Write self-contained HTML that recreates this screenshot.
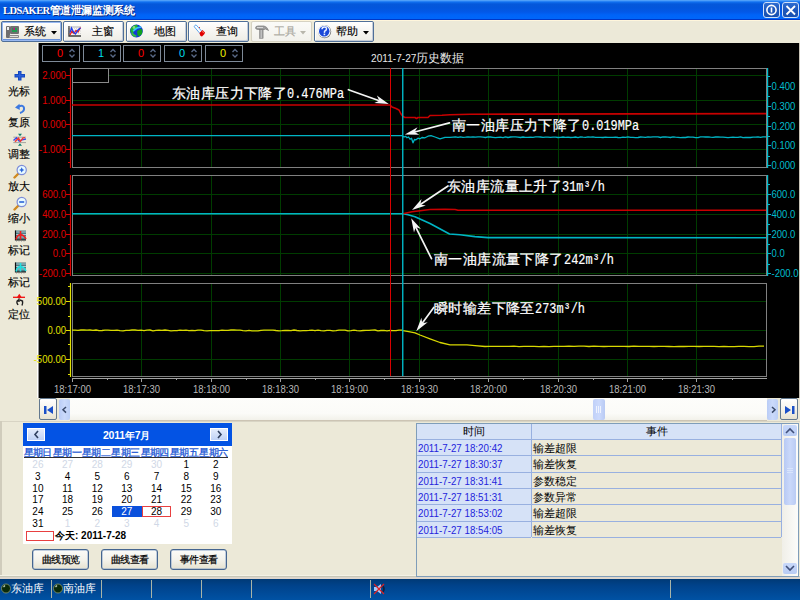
<!DOCTYPE html><html><head><meta charset="utf-8"><style>
*{box-sizing:border-box;margin:0;padding:0}
html,body{width:800px;height:600px;overflow:hidden;background:#ECE9D8;font-family:"Liberation Sans",sans-serif;position:relative}
.a{position:absolute}
#title{left:0;top:0;width:800px;height:20px;background:linear-gradient(#62ACF8 0px,#3A90F8 1px,#1070F0 2px,#0558DA 4px,#0356DC 8px,#0358E8 12px,#0064F8 15px,#0066FA 18.5px,#0040D8 19px,#0030B8 20px)}
#tb{left:0;top:20px;width:800px;height:23px;background:#ECE9D8;border-top:1px solid #FFF6DC}
.btn{position:absolute;top:21px;height:21px;border:1px solid #4F6F98;border-radius:2px;box-shadow:inset 1px 1px 0 #FFFFFF,inset -1px -1px 0 #C4CCD8;background:linear-gradient(#FFFFFF,#F6F5F1 50%,#EEEDE6);font-size:12px;color:#000}
.btn.sel{box-shadow:inset 0 0 0 1px #98B8F0,inset 0 -2px 0 #6890D8;background:linear-gradient(#FFFFFF,#F4F3EE 50%,#E8E6DC)}
.btn .t{position:absolute;top:2px;line-height:14px;white-space:nowrap;-webkit-text-stroke:0.15px currentColor}
#left{left:0;top:43px;width:38px;height:355px;background:#ECE9D8}
.lb{position:absolute;left:8px;font-size:11px;line-height:11px;color:#000;white-space:nowrap;-webkit-text-stroke:0.15px #000}
#chart{left:38px;top:43px;width:762px;height:355px;background:#000}
#bottom{left:0;top:421px;width:800px;height:158px;background:#ECE9D8}
#status{left:0;top:579px;width:800px;height:21px;background:linear-gradient(#003A76,#00428A 30%,#004B99 70%,#0052A4)}
svg text{font-family:"Liberation Sans",sans-serif}
</style></head><body><div id="title" class="a"></div><div id="tb" class="a"></div><div id="left" class="a"></div><div id="bottom" class="a"></div><div id="status" class="a"></div><svg class="a" style="left:0;top:0" width="800" height="600" viewBox="0 0 800 600"><rect x="38" y="43" width="762" height="355" fill="#000"/><line x1="799.5" y1="43" x2="799.5" y2="398" stroke="#C8C4B8"/><line x1="38.5" y1="43" x2="38.5" y2="398" stroke="#8C8C8C"/><line x1="37.5" y1="43" x2="37.5" y2="398" stroke="#FFFFFF"/><rect x="42.5" y="45.5" width="37" height="16" fill="#000" stroke="#7E8A98"/><text x="63" y="57" font-size="11" fill="#FF0000" text-anchor="end">0</text><path d="M69.5,52 L72,49.5 L74.5,52 M69.5,54.5 L72,57 L74.5,54.5" fill="none" stroke="#5A6A88" stroke-width="1.3"/><rect x="83.5" y="45.5" width="37" height="16" fill="#000" stroke="#7E8A98"/><text x="104" y="57" font-size="11" fill="#00DDEE" text-anchor="end">1</text><path d="M110.5,52 L113,49.5 L115.5,52 M110.5,54.5 L113,57 L115.5,54.5" fill="none" stroke="#5A6A88" stroke-width="1.3"/><rect x="123.5" y="45.5" width="37" height="16" fill="#000" stroke="#7E8A98"/><text x="144" y="57" font-size="11" fill="#FF0000" text-anchor="end">0</text><path d="M150.5,52 L153,49.5 L155.5,52 M150.5,54.5 L153,57 L155.5,54.5" fill="none" stroke="#5A6A88" stroke-width="1.3"/><rect x="164.5" y="45.5" width="37" height="16" fill="#000" stroke="#7E8A98"/><text x="185" y="57" font-size="11" fill="#00DDEE" text-anchor="end">0</text><path d="M191.5,52 L194,49.5 L196.5,52 M191.5,54.5 L194,57 L196.5,54.5" fill="none" stroke="#5A6A88" stroke-width="1.3"/><rect x="205.5" y="45.5" width="37" height="16" fill="#000" stroke="#7E8A98"/><text x="226" y="57" font-size="11" fill="#EEEE00" text-anchor="end">0</text><path d="M232.5,52 L235,49.5 L237.5,52 M232.5,54.5 L235,57 L237.5,54.5" fill="none" stroke="#5A6A88" stroke-width="1.3"/><text transform="translate(371,61.5) scale(0.86,1)" font-size="11.8" fill="#E8E8E8">2011-7-27</text><text x="415.5" y="61.5" font-size="12" fill="#E8E8E8">历史数据</text><line x1="72" y1="75.5" x2="766" y2="75.5" stroke="#003C00"/><line x1="72" y1="100.5" x2="766" y2="100.5" stroke="#003C00"/><line x1="72" y1="124.5" x2="766" y2="124.5" stroke="#003C00"/><line x1="72" y1="149.5" x2="766" y2="149.5" stroke="#003C00"/><line x1="141.5" y1="68" x2="141.5" y2="167" stroke="#003C00"/><line x1="211.5" y1="68" x2="211.5" y2="167" stroke="#003C00"/><line x1="280.5" y1="68" x2="280.5" y2="167" stroke="#003C00"/><line x1="349.5" y1="68" x2="349.5" y2="167" stroke="#003C00"/><line x1="419.5" y1="68" x2="419.5" y2="167" stroke="#003C00"/><line x1="488.5" y1="68" x2="488.5" y2="167" stroke="#003C00"/><line x1="558.5" y1="68" x2="558.5" y2="167" stroke="#003C00"/><line x1="627.5" y1="68" x2="627.5" y2="167" stroke="#003C00"/><line x1="696.5" y1="68" x2="696.5" y2="167" stroke="#003C00"/><rect x="72.5" y="68.5" width="694" height="99" fill="none" stroke="#808080"/><line x1="70.5" y1="68" x2="70.5" y2="168" stroke="#E00000" stroke-width="1.2"/><line x1="66" y1="75.5" x2="70" y2="75.5" stroke="#E00000"/><text transform="translate(66,79) scale(0.9,1)" font-size="10.6" fill="#E00000" text-anchor="end">2.000</text><line x1="66" y1="100.5" x2="70" y2="100.5" stroke="#E00000"/><text transform="translate(66,104) scale(0.9,1)" font-size="10.6" fill="#E00000" text-anchor="end">1.000</text><line x1="66" y1="124.5" x2="70" y2="124.5" stroke="#E00000"/><text transform="translate(66,128) scale(0.9,1)" font-size="10.6" fill="#E00000" text-anchor="end">0.000</text><line x1="66" y1="149.5" x2="70" y2="149.5" stroke="#E00000"/><text transform="translate(66,153) scale(0.9,1)" font-size="10.6" fill="#E00000" text-anchor="end">-1.000</text><line x1="68" y1="88.5" x2="70" y2="88.5" stroke="#E00000"/><line x1="68" y1="112.5" x2="70" y2="112.5" stroke="#E00000"/><line x1="68" y1="138.5" x2="70" y2="138.5" stroke="#E00000"/><line x1="68" y1="162.5" x2="70" y2="162.5" stroke="#E00000"/><line x1="767.6" y1="68" x2="767.6" y2="168" stroke="#00BCCC" stroke-width="1.2"/><line x1="767" y1="86.5" x2="771" y2="86.5" stroke="#00BCCC"/><text transform="translate(771.5,90) scale(0.9,1)" font-size="10.6" fill="#00BCCC">0.400</text><line x1="767" y1="106.5" x2="771" y2="106.5" stroke="#00BCCC"/><text transform="translate(771.5,110) scale(0.9,1)" font-size="10.6" fill="#00BCCC">0.300</text><line x1="767" y1="126.5" x2="771" y2="126.5" stroke="#00BCCC"/><text transform="translate(771.5,130) scale(0.9,1)" font-size="10.6" fill="#00BCCC">0.200</text><line x1="767" y1="145.5" x2="771" y2="145.5" stroke="#00BCCC"/><text transform="translate(771.5,149) scale(0.9,1)" font-size="10.6" fill="#00BCCC">0.100</text><line x1="767" y1="165.5" x2="771" y2="165.5" stroke="#00BCCC"/><text transform="translate(771.5,169) scale(0.9,1)" font-size="10.6" fill="#00BCCC">0.000</text><line x1="767" y1="76.5" x2="770" y2="76.5" stroke="#00BCCC"/><line x1="767" y1="96.5" x2="770" y2="96.5" stroke="#00BCCC"/><line x1="767" y1="116.5" x2="770" y2="116.5" stroke="#00BCCC"/><line x1="767" y1="136.5" x2="770" y2="136.5" stroke="#00BCCC"/><line x1="767" y1="156.5" x2="770" y2="156.5" stroke="#00BCCC"/><line x1="72" y1="194.5" x2="766" y2="194.5" stroke="#003C00"/><line x1="72" y1="214.5" x2="766" y2="214.5" stroke="#003C00"/><line x1="72" y1="234.5" x2="766" y2="234.5" stroke="#003C00"/><line x1="72" y1="253.5" x2="766" y2="253.5" stroke="#003C00"/><line x1="72" y1="273.5" x2="766" y2="273.5" stroke="#003C00"/><line x1="141.5" y1="175" x2="141.5" y2="275" stroke="#003C00"/><line x1="211.5" y1="175" x2="211.5" y2="275" stroke="#003C00"/><line x1="280.5" y1="175" x2="280.5" y2="275" stroke="#003C00"/><line x1="349.5" y1="175" x2="349.5" y2="275" stroke="#003C00"/><line x1="419.5" y1="175" x2="419.5" y2="275" stroke="#003C00"/><line x1="488.5" y1="175" x2="488.5" y2="275" stroke="#003C00"/><line x1="558.5" y1="175" x2="558.5" y2="275" stroke="#003C00"/><line x1="627.5" y1="175" x2="627.5" y2="275" stroke="#003C00"/><line x1="696.5" y1="175" x2="696.5" y2="275" stroke="#003C00"/><rect x="72.5" y="175.5" width="694" height="100" fill="none" stroke="#808080"/><line x1="70.5" y1="175" x2="70.5" y2="276" stroke="#E00000" stroke-width="1.2"/><line x1="66" y1="194.5" x2="70" y2="194.5" stroke="#E00000"/><text transform="translate(66,198) scale(0.9,1)" font-size="10.6" fill="#E00000" text-anchor="end">600.0</text><line x1="66" y1="214.5" x2="70" y2="214.5" stroke="#E00000"/><text transform="translate(66,218) scale(0.9,1)" font-size="10.6" fill="#E00000" text-anchor="end">400.0</text><line x1="66" y1="234.5" x2="70" y2="234.5" stroke="#E00000"/><text transform="translate(66,238) scale(0.9,1)" font-size="10.6" fill="#E00000" text-anchor="end">200.0</text><line x1="66" y1="253.5" x2="70" y2="253.5" stroke="#E00000"/><text transform="translate(66,257) scale(0.9,1)" font-size="10.6" fill="#E00000" text-anchor="end">0.0</text><line x1="66" y1="273.5" x2="70" y2="273.5" stroke="#E00000"/><text transform="translate(66,277) scale(0.9,1)" font-size="10.6" fill="#E00000" text-anchor="end">-200.0</text><line x1="68" y1="184.5" x2="70" y2="184.5" stroke="#E00000"/><line x1="68" y1="204.5" x2="70" y2="204.5" stroke="#E00000"/><line x1="68" y1="224.5" x2="70" y2="224.5" stroke="#E00000"/><line x1="68" y1="244.5" x2="70" y2="244.5" stroke="#E00000"/><line x1="68" y1="264.5" x2="70" y2="264.5" stroke="#E00000"/><line x1="767.6" y1="175" x2="767.6" y2="276" stroke="#00BCCC" stroke-width="1.2"/><line x1="767" y1="194.5" x2="771" y2="194.5" stroke="#00BCCC"/><text transform="translate(771.5,198) scale(0.9,1)" font-size="10.6" fill="#00BCCC">600.0</text><line x1="767" y1="214.5" x2="771" y2="214.5" stroke="#00BCCC"/><text transform="translate(771.5,218) scale(0.9,1)" font-size="10.6" fill="#00BCCC">400.0</text><line x1="767" y1="234.5" x2="771" y2="234.5" stroke="#00BCCC"/><text transform="translate(771.5,238) scale(0.9,1)" font-size="10.6" fill="#00BCCC">200.0</text><line x1="767" y1="253.5" x2="771" y2="253.5" stroke="#00BCCC"/><text transform="translate(771.5,257) scale(0.9,1)" font-size="10.6" fill="#00BCCC">0.0</text><line x1="767" y1="273.5" x2="771" y2="273.5" stroke="#00BCCC"/><text transform="translate(771.5,277) scale(0.9,1)" font-size="10.6" fill="#00BCCC">-200.0</text><line x1="767" y1="184.5" x2="770" y2="184.5" stroke="#00BCCC"/><line x1="767" y1="204.5" x2="770" y2="204.5" stroke="#00BCCC"/><line x1="767" y1="224.5" x2="770" y2="224.5" stroke="#00BCCC"/><line x1="767" y1="244.5" x2="770" y2="244.5" stroke="#00BCCC"/><line x1="767" y1="264.5" x2="770" y2="264.5" stroke="#00BCCC"/><line x1="72" y1="301.5" x2="766" y2="301.5" stroke="#003C00"/><line x1="72" y1="330.5" x2="766" y2="330.5" stroke="#003C00"/><line x1="72" y1="359.5" x2="766" y2="359.5" stroke="#003C00"/><line x1="141.5" y1="283" x2="141.5" y2="376" stroke="#003C00"/><line x1="211.5" y1="283" x2="211.5" y2="376" stroke="#003C00"/><line x1="280.5" y1="283" x2="280.5" y2="376" stroke="#003C00"/><line x1="349.5" y1="283" x2="349.5" y2="376" stroke="#003C00"/><line x1="419.5" y1="283" x2="419.5" y2="376" stroke="#003C00"/><line x1="488.5" y1="283" x2="488.5" y2="376" stroke="#003C00"/><line x1="558.5" y1="283" x2="558.5" y2="376" stroke="#003C00"/><line x1="627.5" y1="283" x2="627.5" y2="376" stroke="#003C00"/><line x1="696.5" y1="283" x2="696.5" y2="376" stroke="#003C00"/><rect x="72.5" y="283.5" width="694" height="93" fill="none" stroke="#808080"/><line x1="70.5" y1="283" x2="70.5" y2="377" stroke="#E0E000" stroke-width="1.2"/><line x1="66" y1="301.5" x2="70" y2="301.5" stroke="#E0E000"/><text transform="translate(66,305) scale(0.9,1)" font-size="10.6" fill="#E0E000" text-anchor="end">500.00</text><line x1="66" y1="330.5" x2="70" y2="330.5" stroke="#E0E000"/><text transform="translate(66,334) scale(0.9,1)" font-size="10.6" fill="#E0E000" text-anchor="end">0.00</text><line x1="66" y1="359.5" x2="70" y2="359.5" stroke="#E0E000"/><text transform="translate(66,363) scale(0.9,1)" font-size="10.6" fill="#E0E000" text-anchor="end">-500.00</text><line x1="68" y1="286.5" x2="70" y2="286.5" stroke="#E0E000"/><line x1="68" y1="316.5" x2="70" y2="316.5" stroke="#E0E000"/><line x1="68" y1="344.5" x2="70" y2="344.5" stroke="#E0E000"/><line x1="68" y1="374.5" x2="70" y2="374.5" stroke="#E0E000"/><rect x="72.5" y="68.5" width="36" height="14" fill="#000" stroke="#8A8A8A"/><line x1="72" y1="378.5" x2="767" y2="378.5" stroke="#A0A0A0"/><line x1="72.5" y1="378" x2="72.5" y2="382" stroke="#A0A0A0"/><line x1="107.5" y1="378" x2="107.5" y2="380" stroke="#A0A0A0"/><text transform="translate(72.5,393) scale(0.88,1)" font-size="10.8" fill="#B8B8B8" text-anchor="middle">18:17:00</text><line x1="141.5" y1="378" x2="141.5" y2="382" stroke="#A0A0A0"/><line x1="176.5" y1="378" x2="176.5" y2="380" stroke="#A0A0A0"/><text transform="translate(141.5,393) scale(0.88,1)" font-size="10.8" fill="#B8B8B8" text-anchor="middle">18:17:30</text><line x1="211.5" y1="378" x2="211.5" y2="382" stroke="#A0A0A0"/><line x1="246.5" y1="378" x2="246.5" y2="380" stroke="#A0A0A0"/><text transform="translate(211.5,393) scale(0.88,1)" font-size="10.8" fill="#B8B8B8" text-anchor="middle">18:18:00</text><line x1="280.5" y1="378" x2="280.5" y2="382" stroke="#A0A0A0"/><line x1="315.5" y1="378" x2="315.5" y2="380" stroke="#A0A0A0"/><text transform="translate(280.5,393) scale(0.88,1)" font-size="10.8" fill="#B8B8B8" text-anchor="middle">18:18:30</text><line x1="349.5" y1="378" x2="349.5" y2="382" stroke="#A0A0A0"/><line x1="384.5" y1="378" x2="384.5" y2="380" stroke="#A0A0A0"/><text transform="translate(349.5,393) scale(0.88,1)" font-size="10.8" fill="#B8B8B8" text-anchor="middle">18:19:00</text><line x1="419.5" y1="378" x2="419.5" y2="382" stroke="#A0A0A0"/><line x1="454.5" y1="378" x2="454.5" y2="380" stroke="#A0A0A0"/><text transform="translate(419.5,393) scale(0.88,1)" font-size="10.8" fill="#B8B8B8" text-anchor="middle">18:19:30</text><line x1="488.5" y1="378" x2="488.5" y2="382" stroke="#A0A0A0"/><line x1="523.5" y1="378" x2="523.5" y2="380" stroke="#A0A0A0"/><text transform="translate(488.5,393) scale(0.88,1)" font-size="10.8" fill="#B8B8B8" text-anchor="middle">18:20:00</text><line x1="558.5" y1="378" x2="558.5" y2="382" stroke="#A0A0A0"/><line x1="593.5" y1="378" x2="593.5" y2="380" stroke="#A0A0A0"/><text transform="translate(558.5,393) scale(0.88,1)" font-size="10.8" fill="#B8B8B8" text-anchor="middle">18:20:30</text><line x1="627.5" y1="378" x2="627.5" y2="382" stroke="#A0A0A0"/><line x1="662.5" y1="378" x2="662.5" y2="380" stroke="#A0A0A0"/><text transform="translate(627.5,393) scale(0.88,1)" font-size="10.8" fill="#B8B8B8" text-anchor="middle">18:21:00</text><line x1="696.5" y1="378" x2="696.5" y2="382" stroke="#A0A0A0"/><line x1="732.5" y1="378" x2="732.5" y2="380" stroke="#A0A0A0"/><text transform="translate(696.5,393) scale(0.88,1)" font-size="10.8" fill="#B8B8B8" text-anchor="middle">18:21:30</text><polyline points="72.0,105.0 390.0,105.0 392.0,107.0 396.0,108.5 399.0,110.0 401.0,114.0 403.0,116.5 405.0,117.5 415.0,117.5 416.5,118.5 418.0,117.5 428.0,117.5 430.0,115.5 442.0,115.3 450.0,114.8 470.0,114.2 766.0,113.6" fill="none" stroke="#C80000" stroke-width="1.6" stroke-linejoin="round"/><polyline points="72.0,135.6 402.0,135.6 404.0,137.0 405.5,136.3 407.0,137.8 408.5,137.0 410.0,139.2 411.5,138.3 413.0,142.8 414.5,139.5 416.0,139.8 418.0,138.2 420.0,138.8 422.0,137.5 425.0,137.8 428.0,136.2 431.0,135.6 435.0,137.0 440.0,138.8 445.0,137.3 450.0,137.4 453.0,137.1 455.5,136.9 458.0,137.4 460.5,136.9 463.0,137.3 465.5,137.1 468.0,136.8 470.5,137.2 473.0,136.8 475.5,137.2 478.0,136.9 480.5,136.9 483.0,137.2 485.5,137.5 488.0,136.9 490.5,137.0 493.0,137.3 495.5,137.6 498.0,137.3 500.5,137.1 503.0,137.6 505.5,136.8 508.0,137.5 510.5,137.0 513.0,136.9 515.5,136.9 518.0,137.1 520.5,137.5 523.0,137.0 525.5,137.3 528.0,137.3 530.5,137.1 533.0,137.3 535.5,136.9 538.0,136.9 540.5,137.0 543.0,137.4 545.5,137.2 548.0,137.1 550.5,137.3 553.0,137.2 555.5,137.1 558.0,137.5 560.5,137.4 563.0,137.0 565.5,137.3 568.0,137.2 570.5,137.5 573.0,137.4 575.5,137.0 578.0,137.6 580.5,136.9 583.0,137.2 585.5,137.4 588.0,136.9 590.5,137.2 593.0,136.8 595.5,137.4 598.0,137.4 600.5,137.3 603.0,137.5 605.5,137.1 608.0,137.4 610.5,137.3 613.0,137.3 615.5,137.2 618.0,137.5 620.5,137.6 623.0,137.2 625.5,137.4 628.0,136.9 630.5,137.4 633.0,137.4 635.5,137.6 638.0,137.5 640.5,137.0 643.0,137.1 645.5,137.4 648.0,136.8 650.5,137.2 653.0,136.9 655.5,136.9 658.0,136.9 660.5,137.5 663.0,136.9 665.5,137.0 668.0,137.1 670.5,137.5 673.0,136.9 675.5,137.2 678.0,137.3 680.5,137.6 683.0,137.5 685.5,137.5 688.0,137.0 690.5,137.2 693.0,137.1 695.5,137.6 698.0,137.6 700.5,136.9 703.0,136.9 705.5,137.0 708.0,137.0 710.5,137.2 713.0,137.3 715.5,137.0 718.0,136.8 720.5,137.2 723.0,137.1 725.5,137.3 728.0,137.6 730.5,137.4 733.0,137.2 735.5,137.3 738.0,137.4 740.5,136.8 743.0,137.6 745.5,137.5 748.0,137.5 750.5,137.5 753.0,137.1 755.5,137.1 758.0,136.9 760.5,137.3 763.0,136.9 765.5,136.9 766.0,137.0" fill="none" stroke="#00B4C4" stroke-width="1.3" stroke-linejoin="round"/><polyline points="72.0,213.8 403.0,213.8 408.0,214.8 415.0,216.7 430.0,223.5 449.5,234.0 460.0,234.8 475.0,236.6 488.0,237.6 766.0,237.8" fill="none" stroke="#00B4C4" stroke-width="1.6" stroke-linejoin="round"/><polyline points="403.0,213.8 412.0,211.8 420.0,210.7 430.0,209.6 445.0,209.3 455.0,209.5 458.0,210.3 766.0,210.3" fill="none" stroke="#C80000" stroke-width="1.5" stroke-linejoin="round"/><polyline points="72.0,330.1 75.0,330.1 78.0,330.3 81.0,330.0 84.0,330.0 87.0,330.1 90.0,330.0 93.0,330.3 96.0,330.0 99.0,330.7 102.0,330.5 105.0,330.1 108.0,330.2 111.0,330.3 114.0,330.3 117.0,330.1 120.0,330.7 123.0,330.8 126.0,330.4 129.0,330.4 132.0,330.0 135.0,330.0 138.0,330.3 141.0,330.2 144.0,330.7 147.0,330.1 150.0,330.0 153.0,330.8 156.0,330.4 159.0,330.1 162.0,330.4 165.0,330.0 168.0,330.4 171.0,330.8 174.0,330.7 177.0,330.6 180.0,330.2 183.0,330.3 186.0,330.1 189.0,330.6 192.0,330.4 195.0,330.7 198.0,330.2 201.0,330.2 204.0,330.7 207.0,330.8 210.0,330.7 213.0,330.7 216.0,330.7 219.0,330.6 222.0,330.2 225.0,330.4 228.0,330.3 231.0,330.0 234.0,330.0 237.0,330.2 240.0,330.2 243.0,330.6 246.0,330.8 249.0,330.4 252.0,330.8 255.0,330.8 258.0,330.8 261.0,330.3 264.0,330.1 267.0,330.2 270.0,330.1 273.0,330.1 276.0,330.5 279.0,330.8 282.0,330.7 285.0,330.4 288.0,330.5 291.0,330.7 294.0,330.0 297.0,330.5 300.0,330.8 303.0,330.7 306.0,330.6 309.0,330.4 312.0,330.1 315.0,330.7 318.0,330.2 321.0,330.7 324.0,330.8 327.0,330.3 330.0,330.3 333.0,330.8 336.0,330.6 339.0,330.1 342.0,330.1 345.0,330.1 348.0,330.8 351.0,330.7 354.0,330.1 357.0,330.7 360.0,330.8 363.0,330.5 366.0,330.3 369.0,330.4 372.0,330.1 375.0,330.0 378.0,330.8 381.0,330.5 384.0,330.4 387.0,330.8 390.0,330.3 393.0,330.7 396.0,330.7 399.0,330.1 402.0,330.2 403.0,330.6 410.0,331.9 415.0,332.8 420.0,335.0 430.0,338.8 440.0,342.5 450.0,344.8 467.0,344.8 475.0,345.6 485.0,346.5 489.0,346.3 494.0,346.3 499.0,346.4 504.0,346.3 509.0,346.4 514.0,346.2 519.0,346.6 524.0,346.3 529.0,346.4 534.0,346.4 539.0,346.6 544.0,346.4 549.0,346.6 554.0,346.4 559.0,346.4 564.0,346.4 569.0,346.2 574.0,346.4 579.0,346.2 584.0,346.2 589.0,346.5 594.0,346.2 599.0,346.4 604.0,346.5 609.0,346.4 614.0,346.3 619.0,346.4 624.0,346.4 629.0,346.5 634.0,346.2 639.0,346.4 644.0,346.3 649.0,346.3 654.0,346.5 659.0,346.4 664.0,346.4 669.0,346.5 674.0,346.6 679.0,346.4 684.0,346.5 689.0,346.4 694.0,346.4 699.0,346.5 704.0,346.4 709.0,346.4 714.0,346.4 719.0,346.6 724.0,346.5 729.0,346.6 734.0,346.6 739.0,346.3 744.0,346.4 749.0,346.6 754.0,346.6 759.0,346.2 764.0,346.2" fill="none" stroke="#D8D800" stroke-width="1.3" stroke-linejoin="round"/><line x1="390.5" y1="68" x2="390.5" y2="376" stroke="#D80000"/><line x1="402.75" y1="68" x2="402.75" y2="376" stroke="#00B8C8" stroke-width="1.4"/></svg><div class="a" style="left:3px;top:1.5px;height:14px;line-height:14px;color:#fff;font-weight:bold;white-space:nowrap;text-shadow:1px 1px 0 #0A2A80"><span style="font-family:'Liberation Serif',serif;font-size:10.5px;letter-spacing:-0.6px">LDSAKER</span><span style="font-size:10.8px;letter-spacing:-0.4px">管道泄漏监测系统</span></div><div class="a" style="left:763px;top:2px;width:17px;height:16px;border:1px solid #D0E0F8;border-radius:3px;background:linear-gradient(#2E6CD0,#1E58BC 50%,#1850B0)"></div><div class="a" style="left:782px;top:2px;width:17px;height:16px;border:1px solid #D0E0F8;border-radius:3px;background:linear-gradient(#2E6CD0,#1E58BC 50%,#1850B0)"></div><svg class="a" style="left:763px;top:2px" width="36" height="16"><circle cx="8.5" cy="8" r="4.6" fill="none" stroke="#fff" stroke-width="1.6"/><line x1="8.5" y1="5.5" x2="8.5" y2="10.5" stroke="#fff" stroke-width="1.6"/><path d="M23.5,4 L32,12.5 M32,4 L23.5,12.5" stroke="#fff" stroke-width="1.8"/></svg><div class="btn sel" style="left:1px;width:61px"><span class="t" style="left:21.5px;color:#000;font-size:11px">系统</span><svg class="a" style="left:49px;top:8.5px" width="8" height="5"><path d="M0,0 L6,0 L3,3.5 Z" fill="#000"/></svg><svg class="a" style="left:3px;top:3px" width="15" height="14"><rect x="1" y="1" width="4" height="12" fill="#6E6E6E" rx="1"/><rect x="2" y="2" width="2" height="3" fill="#EEE"/><rect x="5" y="1" width="9" height="8" fill="#707070" rx="1"/><rect x="7" y="3" width="5" height="4" fill="#1E9E50"/><rect x="8" y="3" width="2" height="2" fill="#B02080"/><rect x="4" y="10" width="10" height="3" fill="#888" rx="1"/><rect x="5" y="11" width="8" height="1" fill="#DDD"/></svg></div><div class="btn" style="left:63px;width:61px"><span class="t" style="left:27.5px;color:#000;font-size:11px">主窗</span><svg class="a" style="left:4px;top:4px" width="14" height="11"><path d="M0,2.5 H13 M0,5 H13 M0,7.5 H13" stroke="#C8C8C8" stroke-width="0.7" stroke-dasharray="1,1"/><path d="M1,0 V10 H13" fill="none" stroke="#404040" stroke-width="1.4"/><path d="M0.5,1 H13" stroke="#A0A0A0" stroke-width="0.8"/><path d="M2,9 L4,5 L6,7.5 L8,4.5 L10,6 L12.5,1.5" fill="none" stroke="#F02020" stroke-width="1.3"/><path d="M2,6.5 L3.5,2 L5.5,6 L7.5,8 L10,4 L12.5,2" fill="none" stroke="#2040F0" stroke-width="1.3"/></svg></div><div class="btn" style="left:126px;width:61px"><span class="t" style="left:27px;color:#000;font-size:11px">地图</span><svg class="a" style="left:2px;top:2px" width="15" height="15"><circle cx="7.4" cy="7" r="6.4" fill="#1038D8"/><path d="M2,4 Q4,1 8,0.8 L9,3 L6,6 L4,9 L1.5,8 Q1,6 2,4 Z" fill="#20B030"/><path d="M8,7 L12.5,4.5 Q14,7 13,10 L10,12.5 L8.5,11 Z" fill="#10A020"/><path d="M3,8 L5,10 L8,12 L6,13 Q3,12 2,9.5 Z" fill="#30C040"/><path d="M4,7 L8,4 L12,3" fill="none" stroke="#30C8F8" stroke-width="1.6"/><circle cx="5" cy="3.5" r="1.4" fill="#B0F0A0" opacity="0.7"/></svg></div><div class="btn" style="left:188px;width:61px"><span class="t" style="left:27px;color:#000;font-size:11px">查询</span><svg class="a" style="left:4px;top:2px" width="13" height="13"><path d="M1,2.5 L3,0.8 L9,7.5 L7,9.5 Z" fill="#FFFFFF" stroke="#60A8F0" stroke-width="1"/><path d="M6,4 L7,3" stroke="#E04040" stroke-width="1"/><path d="M6.5,9 L9.5,6 L12,8.5 Q12,10 9,12.5 Q7,12.5 6.5,9 Z" fill="#E00000"/><path d="M9,7.5 L11,8.5" stroke="#FF8060" stroke-width="1"/></svg></div><div class="btn" style="left:251px;width:61px;border-color:#D6D2C2;box-shadow:none;background:linear-gradient(#FBFBF8,#F2F1EC)"><span class="t" style="left:21.5px;color:#A8A69C;font-size:11px">工具</span><svg class="a" style="left:48px;top:8.5px" width="8" height="5"><path d="M0,0 L6,0 L3,3.5 Z" fill="#B8B6AC"/></svg><svg class="a" style="left:3px;top:3px" width="15" height="14"><path d="M0.5,3 Q0.5,1 3,1 L9,1 Q12,1.5 13.5,5.5 Q12,4.5 10.5,4 L9.5,4.5 L4,4.5 Q0.5,4.5 0.5,3 Z" fill="#A0A0A0" stroke="#7A7A7A" stroke-width="0.7"/><path d="M2,2.5 H8" stroke="#E8E8E8" stroke-width="0.8"/><rect x="4.5" y="4.5" width="3.6" height="8.8" fill="#9A9A9A" stroke="#7A7A7A" stroke-width="0.5"/><path d="M6.2,5 V13" stroke="#E0E0E0" stroke-width="0.8"/></svg></div><div class="btn" style="left:314px;width:60px"><span class="t" style="left:21px;color:#000;font-size:11px">帮助</span><svg class="a" style="left:48px;top:8.5px" width="8" height="5"><path d="M0,0 L6,0 L3,3.5 Z" fill="#000"/></svg><svg class="a" style="left:2px;top:2px" width="15" height="15"><circle cx="7.6" cy="7.6" r="6.6" fill="#707070"/><circle cx="7.2" cy="7.2" r="6.3" fill="#F4F8FF"/><circle cx="7.2" cy="7.2" r="5.2" fill="#1A48D8"/><path d="M5,5.2 Q5.2,3 7.3,3 Q9.6,3 9.5,5 Q9.4,6.4 7.6,7.2 L7.4,8.8" fill="none" stroke="#E8F0FF" stroke-width="1.5"/><rect x="6.6" y="9.6" width="1.6" height="1.6" fill="#E8F0FF"/></svg></div><div class="lb" style="top:86.0px;left:8px;font-size:11px;line-height:11px">光标</div><div class="lb" style="top:116.5px;left:8px;font-size:11px;line-height:11px">复原</div><div class="lb" style="top:149.0px;left:8px;font-size:11px;line-height:11px">调整</div><div class="lb" style="top:180.5px;left:8px;font-size:11px;line-height:11px">放大</div><div class="lb" style="top:213.0px;left:8px;font-size:11px;line-height:11px">缩小</div><div class="lb" style="top:244.5px;left:8px;font-size:11px;line-height:11px">标记</div><div class="lb" style="top:276.5px;left:8px;font-size:11px;line-height:11px">标记</div><div class="lb" style="top:308.5px;left:8px;font-size:11px;line-height:11px">定位</div><svg class="a" style="left:14px;top:71px" width="12" height="10"><path d="M4,0 H7.5 V3 H11 V6.5 H7.5 V9.5 H4 V6.5 H0.5 V3 H4 Z" fill="#1448C0"/><path d="M5,1 H6.5 V4 H10 V5.5 H6.5 V8.5 H5 V5.5 H1.5 V4 H5 Z" fill="#2A5ED8"/></svg><svg class="a" style="left:14px;top:103px" width="12" height="11"><path d="M4.5,3.5 Q9.5,1.5 10,5 Q10.5,8.5 6,10" fill="none" stroke="#3C78E0" stroke-width="2"/><path d="M1,4.5 L5.5,0.8 L5.8,7 Z" fill="#3C78E0"/></svg><svg class="a" style="left:12px;top:133px" width="16" height="14"><path d="M6,0.8 H10 L8,3.3 Z M6,12.8 H10 L8,10.2 Z" fill="#108070"/><path d="M1.3,4.2 H14 M1.3,9.6 H14" stroke="#909090" stroke-width="0.8"/><path d="M1.5,7.5 L4.5,4.8 L7.2,8.2 L10,6.8 L14,6" fill="none" stroke="#3A48E8" stroke-width="1.4"/><path d="M3,8.8 L6.5,5.2 L8.5,8.3 L11,4.8 L13,4.6" fill="none" stroke="#F03A3A" stroke-width="1.4"/></svg><svg class="a" style="left:12px;top:164px" width="16" height="15"><path d="M2.5,13.5 L7,9" stroke="#D08A20" stroke-width="2.4" stroke-linecap="round"/><circle cx="9.7" cy="6" r="4.6" fill="#E8FAFF" stroke="#7C8CD8" stroke-width="1.2"/><path d="M9.7,3.3 L11,6 L9.7,8.7 L8.4,6 Z M7,6 L9.7,4.7 L12.4,6 L9.7,7.3 Z" fill="#2A64D8"/></svg><svg class="a" style="left:12px;top:196px" width="16" height="15"><path d="M2.5,13.5 L7,9" stroke="#D08A20" stroke-width="2.4" stroke-linecap="round"/><circle cx="9.7" cy="6" r="4.6" fill="#E8FAFF" stroke="#7C8CD8" stroke-width="1.2"/><path d="M7.2,6 H12.2" stroke="#2A64D8" stroke-width="1.6"/></svg><svg class="a" style="left:14px;top:230px" width="13" height="12"><rect x="1" y="0.5" width="11" height="9.5" fill="#4E7C84"/><path d="M1.5,2 H12 M1.5,4.5 H12 M1.5,7 H12" stroke="#C8E0E8" stroke-width="0.8"/><path d="M1.5,0.5 V10 H12" fill="none" stroke="#101010" stroke-width="1.2"/><path d="M6.5,1 V9.5 M2,9.5 Q3,5 6.5,4.5 Q10,5 12,9" fill="none" stroke="#F02020" stroke-width="1.6"/><path d="M2,11.5 H12" stroke="#B0B0B0" stroke-width="0.8" stroke-dasharray="1,1.5"/></svg><svg class="a" style="left:14px;top:262px" width="13" height="12"><rect x="1" y="0.5" width="11" height="9.5" fill="#4E7C84"/><path d="M1.5,2 H12 M1.5,4.5 H12 M1.5,7 H12" stroke="#C8E0E8" stroke-width="0.8"/><path d="M1.5,0.5 V10 H12" fill="none" stroke="#101010" stroke-width="1.2"/><path d="M6.5,1 V9.5 M2,9.5 Q3,5 6.5,4.5 Q10,5 12,9" fill="none" stroke="#20E0E0" stroke-width="1.6"/><path d="M2,11.5 H12" stroke="#B0B0B0" stroke-width="0.8" stroke-dasharray="1,1.5"/></svg><svg class="a" style="left:12px;top:293px" width="16" height="14"><path d="M1,4.3 H13" stroke="#F01010" stroke-width="1.3"/><path d="M7.3,0.8 L9.8,4.6 L7.3,5.6 L4.8,4.6 Z" fill="#F01010"/><path d="M7,5.5 V9 M7,7 Q4.5,7.5 5,10 L6,12 M8,7 L10.5,8 Q11,10 10,12.5" fill="none" stroke="#202020" stroke-width="1.4"/></svg><div class="a" style="left:70px;top:398px;width:697px;height:23px;background:linear-gradient(#FDFDFB,#FBFBF8 70%,#F2F1EA);border-bottom:1px solid #CCC4B4"></div><div class="a" style="left:39px;top:398px;width:18px;height:22px;border:1px solid #62788E;border-radius:2px;background:linear-gradient(#FFFFFF,#F3F1E6 60%,#E6E2D0)"><svg class="a" style="left:3px;top:6px" width="12" height="10"><rect x="1" y="1" width="2.5" height="8" fill="#1A50C8"/><path d="M10,1 L10,9 L4,5 Z" fill="#1A50C8"/></svg></div><div class="a" style="left:59px;top:399px;width:11px;height:21px;border-radius:2px;background:linear-gradient(90deg,#B9CCF6,#CBDAFB 50%,#BCCFF6)"><svg class="a" style="left:2px;top:7px" width="8" height="8"><path d="M5,1 L2,3.8 L5,6.6" fill="none" stroke="#3A4A6A" stroke-width="1.5"/></svg></div><div class="a" style="left:767px;top:399px;width:11px;height:21px;border-radius:2px;background:linear-gradient(90deg,#B9CCF6,#CBDAFB 50%,#BCCFF6)"><svg class="a" style="left:3px;top:7px" width="8" height="8"><path d="M2,1 L5,3.8 L2,6.6" fill="none" stroke="#3A4A6A" stroke-width="1.5"/></svg></div><div class="a" style="left:780px;top:398px;width:18px;height:22px;border:1px solid #62788E;border-radius:2px;background:linear-gradient(#FFFFFF,#F3F1E6 60%,#E6E2D0)"><svg class="a" style="left:3px;top:6px" width="12" height="10"><path d="M1,1 L1,9 L7,5 Z" fill="#1A50C8"/><rect x="8" y="1" width="2.5" height="8" fill="#1A50C8"/></svg></div><div class="a" style="left:593px;top:399px;width:12px;height:21px;border-radius:2px;background:linear-gradient(90deg,#C0D0F8,#CCDAFC 50%,#B8CAF4)"><svg class="a" style="left:3px;top:7px" width="6" height="7"><path d="M0.5,0 V7 M2.5,0 V7 M4.5,0 V7" stroke="#EEF3FF" stroke-width="1"/></svg></div><div class="a" style="left:0;top:421px;width:800px;height:1px;background:#D8D4C4"></div><div class="a" style="left:0;top:421px;width:2px;height:158px;background:#D0CCBC"></div><div class="a" style="left:0;top:575px;width:800px;height:1px;background:#F4F2E6"></div><div class="a" style="left:0;top:576px;width:800px;height:1px;background:#C8C8B8"></div><div class="a" style="left:0;top:577px;width:800px;height:2px;background:#DCD5CC"></div><div class="a" style="left:23px;top:423px;width:209px;height:121px;background:#fff"></div><div class="a" style="left:23px;top:423px;width:209px;height:23px;background:#0353E4"></div><div class="a" style="left:27px;top:428px;width:18px;height:13px;border:1px solid #fff;background:linear-gradient(#E4ECFC,#C0D2F6)"><svg class="a" style="left:5px;top:1px" width="8" height="10"><path d="M5,1 L2,4.5 L5,8" fill="none" stroke="#304060" stroke-width="1.6"/></svg></div><div class="a" style="left:210px;top:428px;width:18px;height:13px;border:1px solid #fff;background:linear-gradient(#E4ECFC,#C0D2F6)"><svg class="a" style="left:5px;top:1px" width="8" height="10"><path d="M2,1 L5,4.5 L2,8" fill="none" stroke="#304060" stroke-width="1.6"/></svg></div><div class="a" style="left:22px;top:428.5px;width:209px;text-align:center;color:#fff;font-weight:bold;font-size:10.5px;letter-spacing:-0.2px;line-height:13px">2011<span style="font-size:10px">年</span>7<span style="font-size:10px">月</span></div><div class="a" style="left:23.5px;top:446.5px;font-size:10px;letter-spacing:-0.6px;line-height:11px;color:#2056D4;-webkit-text-stroke:0.3px #2056D4;white-space:nowrap">星期日</div><div class="a" style="left:52.8px;top:446.5px;font-size:10px;letter-spacing:-0.6px;line-height:11px;color:#2056D4;-webkit-text-stroke:0.3px #2056D4;white-space:nowrap">星期一</div><div class="a" style="left:82.1px;top:446.5px;font-size:10px;letter-spacing:-0.6px;line-height:11px;color:#2056D4;-webkit-text-stroke:0.3px #2056D4;white-space:nowrap">星期二</div><div class="a" style="left:111.4px;top:446.5px;font-size:10px;letter-spacing:-0.6px;line-height:11px;color:#2056D4;-webkit-text-stroke:0.3px #2056D4;white-space:nowrap">星期三</div><div class="a" style="left:140.7px;top:446.5px;font-size:10px;letter-spacing:-0.6px;line-height:11px;color:#2056D4;-webkit-text-stroke:0.3px #2056D4;white-space:nowrap">星期四</div><div class="a" style="left:170.0px;top:446.5px;font-size:10px;letter-spacing:-0.6px;line-height:11px;color:#2056D4;-webkit-text-stroke:0.3px #2056D4;white-space:nowrap">星期五</div><div class="a" style="left:199.3px;top:446.5px;font-size:10px;letter-spacing:-0.6px;line-height:11px;color:#2056D4;-webkit-text-stroke:0.3px #2056D4;white-space:nowrap">星期六</div><div class="a" style="left:24px;top:457px;width:204px;height:1px;background:#303030"></div><div class="a" style="left:22.9px;top:459.0px;width:30px;text-align:center;font-size:10px;line-height:12px;color:#D0D8E6">26</div><div class="a" style="left:52.5px;top:459.0px;width:30px;text-align:center;font-size:10px;line-height:12px;color:#D0D8E6">27</div><div class="a" style="left:82.2px;top:459.0px;width:30px;text-align:center;font-size:10px;line-height:12px;color:#D0D8E6">28</div><div class="a" style="left:111.8px;top:459.0px;width:30px;text-align:center;font-size:10px;line-height:12px;color:#D0D8E6">29</div><div class="a" style="left:141.5px;top:459.0px;width:30px;text-align:center;font-size:10px;line-height:12px;color:#D0D8E6">30</div><div class="a" style="left:171.2px;top:459.0px;width:30px;text-align:center;font-size:10px;line-height:12px;color:#000">1</div><div class="a" style="left:200.8px;top:459.0px;width:30px;text-align:center;font-size:10px;line-height:12px;color:#000">2</div><div class="a" style="left:22.9px;top:470.8px;width:30px;text-align:center;font-size:10px;line-height:12px;color:#000">3</div><div class="a" style="left:52.5px;top:470.8px;width:30px;text-align:center;font-size:10px;line-height:12px;color:#000">4</div><div class="a" style="left:82.2px;top:470.8px;width:30px;text-align:center;font-size:10px;line-height:12px;color:#000">5</div><div class="a" style="left:111.8px;top:470.8px;width:30px;text-align:center;font-size:10px;line-height:12px;color:#000">6</div><div class="a" style="left:141.5px;top:470.8px;width:30px;text-align:center;font-size:10px;line-height:12px;color:#000">7</div><div class="a" style="left:171.2px;top:470.8px;width:30px;text-align:center;font-size:10px;line-height:12px;color:#000">8</div><div class="a" style="left:200.8px;top:470.8px;width:30px;text-align:center;font-size:10px;line-height:12px;color:#000">9</div><div class="a" style="left:22.9px;top:482.5px;width:30px;text-align:center;font-size:10px;line-height:12px;color:#000">10</div><div class="a" style="left:52.5px;top:482.5px;width:30px;text-align:center;font-size:10px;line-height:12px;color:#000">11</div><div class="a" style="left:82.2px;top:482.5px;width:30px;text-align:center;font-size:10px;line-height:12px;color:#000">12</div><div class="a" style="left:111.8px;top:482.5px;width:30px;text-align:center;font-size:10px;line-height:12px;color:#000">13</div><div class="a" style="left:141.5px;top:482.5px;width:30px;text-align:center;font-size:10px;line-height:12px;color:#000">14</div><div class="a" style="left:171.2px;top:482.5px;width:30px;text-align:center;font-size:10px;line-height:12px;color:#000">15</div><div class="a" style="left:200.8px;top:482.5px;width:30px;text-align:center;font-size:10px;line-height:12px;color:#000">16</div><div class="a" style="left:22.9px;top:494.2px;width:30px;text-align:center;font-size:10px;line-height:12px;color:#000">17</div><div class="a" style="left:52.5px;top:494.2px;width:30px;text-align:center;font-size:10px;line-height:12px;color:#000">18</div><div class="a" style="left:82.2px;top:494.2px;width:30px;text-align:center;font-size:10px;line-height:12px;color:#000">19</div><div class="a" style="left:111.8px;top:494.2px;width:30px;text-align:center;font-size:10px;line-height:12px;color:#000">20</div><div class="a" style="left:141.5px;top:494.2px;width:30px;text-align:center;font-size:10px;line-height:12px;color:#000">21</div><div class="a" style="left:171.2px;top:494.2px;width:30px;text-align:center;font-size:10px;line-height:12px;color:#000">22</div><div class="a" style="left:200.8px;top:494.2px;width:30px;text-align:center;font-size:10px;line-height:12px;color:#000">23</div><div class="a" style="left:22.9px;top:505.9px;width:30px;text-align:center;font-size:10px;line-height:12px;color:#000">24</div><div class="a" style="left:52.5px;top:505.9px;width:30px;text-align:center;font-size:10px;line-height:12px;color:#000">25</div><div class="a" style="left:82.2px;top:505.9px;width:30px;text-align:center;font-size:10px;line-height:12px;color:#000">26</div><div class="a" style="left:112px;top:506px;width:30px;height:11px;background:#0A50DC"></div><div class="a" style="left:111.8px;top:505.9px;width:30px;text-align:center;font-size:10px;line-height:12px;color:#fff">27</div><div class="a" style="left:142px;top:506px;width:29px;height:11px;border:1px solid #E84040"></div><div class="a" style="left:141.5px;top:505.9px;width:30px;text-align:center;font-size:10px;line-height:12px;color:#000">28</div><div class="a" style="left:171.2px;top:505.9px;width:30px;text-align:center;font-size:10px;line-height:12px;color:#000">29</div><div class="a" style="left:200.8px;top:505.9px;width:30px;text-align:center;font-size:10px;line-height:12px;color:#000">30</div><div class="a" style="left:22.9px;top:517.6px;width:30px;text-align:center;font-size:10px;line-height:12px;color:#000">31</div><div class="a" style="left:52.5px;top:517.6px;width:30px;text-align:center;font-size:10px;line-height:12px;color:#D0D8E6">1</div><div class="a" style="left:82.2px;top:517.6px;width:30px;text-align:center;font-size:10px;line-height:12px;color:#D0D8E6">2</div><div class="a" style="left:111.8px;top:517.6px;width:30px;text-align:center;font-size:10px;line-height:12px;color:#D0D8E6">3</div><div class="a" style="left:141.5px;top:517.6px;width:30px;text-align:center;font-size:10px;line-height:12px;color:#D0D8E6">4</div><div class="a" style="left:171.2px;top:517.6px;width:30px;text-align:center;font-size:10px;line-height:12px;color:#D0D8E6">5</div><div class="a" style="left:200.8px;top:517.6px;width:30px;text-align:center;font-size:10px;line-height:12px;color:#D0D8E6">6</div><div class="a" style="left:26px;top:531px;width:28px;height:10px;border:1px solid #E84040;background:#fff"></div><div class="a" style="left:55px;top:530px;font-size:10px;line-height:12px;font-weight:bold;color:#000;white-space:nowrap">今天: 2011-7-28</div><div class="a" style="left:32px;top:549px;width:57px;height:21px;border:1px solid #45658F;border-radius:3px;box-shadow:inset 0 0 0 0.5px #8AA4C8;background:linear-gradient(#FBFBF8,#F4F3EC 50%,#E6E2D0);font-size:10px;letter-spacing:-0.6px;text-indent:0.6px;line-height:19px;text-align:center;color:#000;-webkit-text-stroke:0.2px #000">曲线预览</div><div class="a" style="left:101px;top:549px;width:57px;height:21px;border:1px solid #45658F;border-radius:3px;box-shadow:inset 0 0 0 0.5px #8AA4C8;background:linear-gradient(#FBFBF8,#F4F3EC 50%,#E6E2D0);font-size:10px;letter-spacing:-0.6px;text-indent:0.6px;line-height:19px;text-align:center;color:#000;-webkit-text-stroke:0.2px #000">曲线查看</div><div class="a" style="left:170px;top:549px;width:57px;height:21px;border:1px solid #45658F;border-radius:3px;box-shadow:inset 0 0 0 0.5px #8AA4C8;background:linear-gradient(#FBFBF8,#F4F3EC 50%,#E6E2D0);font-size:10px;letter-spacing:-0.6px;text-indent:0.6px;line-height:19px;text-align:center;color:#000;-webkit-text-stroke:0.2px #000">事件查看</div><div class="a" style="left:416px;top:423px;width:383px;height:154px;border:1px solid #7F9DB9;background:#ECE9D8"></div><div class="a" style="left:417px;top:424px;width:365px;height:16px;background:#D6E2F7;border-bottom:1px solid #98B0E0"></div><div class="a" style="left:531px;top:424px;width:1px;height:113px;background:#98B0E0"></div><div class="a" style="left:781px;top:424px;width:1px;height:113px;background:#98B0E0"></div><div class="a" style="left:417px;top:424px;width:114px;text-align:center;font-size:11px;line-height:15px">时间</div><div class="a" style="left:532px;top:424px;width:249px;text-align:center;font-size:11px;line-height:15px">事件</div><div class="a" style="left:417px;top:440.0px;width:114px;height:16.4px;background:#D6E2F7;border-bottom:1px solid #98B0E0"></div><div class="a" style="left:532px;top:440.0px;width:249px;height:16.4px;border-bottom:1px solid #98B0E0"></div><div class="a" style="left:418px;top:441.0px;font-size:10.5px;line-height:14px;color:#2424DC;transform:scaleX(0.93);transform-origin:0 0;white-space:nowrap">2011-7-27 18:20:42</div><div class="a" style="left:533px;top:441.0px;font-size:11px;line-height:14px;color:#000;white-space:nowrap">输差超限</div><div class="a" style="left:417px;top:456.4px;width:114px;height:16.4px;background:#D6E2F7;border-bottom:1px solid #98B0E0"></div><div class="a" style="left:532px;top:456.4px;width:249px;height:16.4px;border-bottom:1px solid #98B0E0"></div><div class="a" style="left:418px;top:457.4px;font-size:10.5px;line-height:14px;color:#2424DC;transform:scaleX(0.93);transform-origin:0 0;white-space:nowrap">2011-7-27 18:30:37</div><div class="a" style="left:533px;top:457.4px;font-size:11px;line-height:14px;color:#000;white-space:nowrap">输差恢复</div><div class="a" style="left:417px;top:472.7px;width:114px;height:16.4px;background:#D6E2F7;border-bottom:1px solid #98B0E0"></div><div class="a" style="left:532px;top:472.7px;width:249px;height:16.4px;border-bottom:1px solid #98B0E0"></div><div class="a" style="left:418px;top:473.7px;font-size:10.5px;line-height:14px;color:#2424DC;transform:scaleX(0.93);transform-origin:0 0;white-space:nowrap">2011-7-27 18:31:41</div><div class="a" style="left:533px;top:473.7px;font-size:11px;line-height:14px;color:#000;white-space:nowrap">参数稳定</div><div class="a" style="left:417px;top:489.1px;width:114px;height:16.4px;background:#D6E2F7;border-bottom:1px solid #98B0E0"></div><div class="a" style="left:532px;top:489.1px;width:249px;height:16.4px;border-bottom:1px solid #98B0E0"></div><div class="a" style="left:418px;top:490.1px;font-size:10.5px;line-height:14px;color:#2424DC;transform:scaleX(0.93);transform-origin:0 0;white-space:nowrap">2011-7-27 18:51:31</div><div class="a" style="left:533px;top:490.1px;font-size:11px;line-height:14px;color:#000;white-space:nowrap">参数异常</div><div class="a" style="left:417px;top:505.4px;width:114px;height:16.4px;background:#D6E2F7;border-bottom:1px solid #98B0E0"></div><div class="a" style="left:532px;top:505.4px;width:249px;height:16.4px;border-bottom:1px solid #98B0E0"></div><div class="a" style="left:418px;top:506.4px;font-size:10.5px;line-height:14px;color:#2424DC;transform:scaleX(0.93);transform-origin:0 0;white-space:nowrap">2011-7-27 18:53:02</div><div class="a" style="left:533px;top:506.4px;font-size:11px;line-height:14px;color:#000;white-space:nowrap">输差超限</div><div class="a" style="left:417px;top:521.8px;width:114px;height:16.4px;background:#D6E2F7;border-bottom:1px solid #98B0E0"></div><div class="a" style="left:532px;top:521.8px;width:249px;height:16.4px;border-bottom:1px solid #98B0E0"></div><div class="a" style="left:418px;top:522.8px;font-size:10.5px;line-height:14px;color:#2424DC;transform:scaleX(0.93);transform-origin:0 0;white-space:nowrap">2011-7-27 18:54:05</div><div class="a" style="left:533px;top:522.8px;font-size:11px;line-height:14px;color:#000;white-space:nowrap">输差恢复</div><div class="a" style="left:782px;top:424px;width:16px;height:152px;background:linear-gradient(90deg,#F0EFE8,#FCFCFA)"></div><div class="a" style="left:783px;top:425px;width:14px;height:11px;border-radius:2px;background:linear-gradient(#C8D8FA,#B8CCF4)"><svg class="a" style="left:2px;top:2px" width="10" height="7"><path d="M1,6 L5,2 L9,6" fill="none" stroke="#40507A" stroke-width="1.6"/></svg></div><div class="a" style="left:784px;top:437.5px;width:12px;height:67px;border-radius:2px;background:linear-gradient(90deg,#B8CAF4,#CAD8FA 50%,#BACCF4)"><svg class="a" style="left:3px;top:30px" width="6" height="7"><path d="M0,0.5 H6 M0,2.5 H6 M0,4.5 H6" stroke="#D8E4FC"/></svg></div><div class="a" style="left:783px;top:563px;width:14px;height:11px;border-radius:2px;background:linear-gradient(#C8D8FA,#B8CCF4)"><svg class="a" style="left:2px;top:2px" width="10" height="7"><path d="M1,1 L5,5 L9,1" fill="none" stroke="#40507A" stroke-width="1.6"/></svg></div><div class="a" style="left:51px;top:580px;width:1px;height:18px;background:#A8B4A8"></div><div class="a" style="left:101px;top:580px;width:1px;height:18px;background:#A8B4A8"></div><div class="a" style="left:151px;top:580px;width:1px;height:18px;background:#A8B4A8"></div><div class="a" style="left:201px;top:580px;width:1px;height:18px;background:#A8B4A8"></div><div class="a" style="left:251px;top:580px;width:1px;height:18px;background:#A8B4A8"></div><div class="a" style="left:370px;top:580px;width:1px;height:18px;background:#A8B4A8"></div><div class="a" style="left:670px;top:580px;width:1px;height:18px;background:#A8B4A8"></div><svg class="a" style="left:1px;top:583px" width="10" height="11"><circle cx="5" cy="5.5" r="4.5" fill="#0A2A0A" stroke="#8A9A70" stroke-width="0.8"/><path d="M2.5,4 L4,2.5" stroke="#C0D0C0" stroke-width="1.2"/></svg><div class="a" style="left:11px;top:582px;font-size:11px;line-height:13px;color:#fff;white-space:nowrap">东油库</div><svg class="a" style="left:52.5px;top:583px" width="10" height="11"><circle cx="5" cy="5.5" r="4.5" fill="#0A2A0A" stroke="#8A9A70" stroke-width="0.8"/><path d="M2.5,4 L4,2.5" stroke="#C0D0C0" stroke-width="1.2"/></svg><div class="a" style="left:62.5px;top:582px;font-size:11px;line-height:13px;color:#fff;white-space:nowrap">南油库</div><svg class="a" style="left:372px;top:582px" width="16" height="14"><path d="M2,5 H5 L9,2 V12 L5,9 H2 Z" fill="#A8C8F8"/><path d="M11,4 Q13,7 11,10" fill="none" stroke="#102040" stroke-width="1.6"/><path d="M2,2 L12,12 M12,2 L2,12" stroke="#E02020" stroke-width="1.2"/></svg><div class="a" style="left:172px;top:85px;color:#fff;white-space:nowrap;line-height:16px"><span style="font-size:14.2px;letter-spacing:0.4px;-webkit-text-stroke:0.25px #fff">东油库压力下降了</span><span style="display:inline-block;font-family:'Liberation Mono',monospace;font-size:14px;transform:scaleX(0.85);transform-origin:0 50%;-webkit-text-stroke:0.2px #fff">0.476MPa</span></div><div class="a" style="left:452px;top:117px;color:#fff;white-space:nowrap;line-height:16px"><span style="font-size:14.2px;letter-spacing:0.4px;-webkit-text-stroke:0.25px #fff">南一油库压力下降了</span><span style="display:inline-block;font-family:'Liberation Mono',monospace;font-size:14px;transform:scaleX(0.85);transform-origin:0 50%;-webkit-text-stroke:0.2px #fff">0.019MPa</span></div><div class="a" style="left:447px;top:178px;color:#fff;white-space:nowrap;line-height:16px"><span style="font-size:14.2px;letter-spacing:0.4px;-webkit-text-stroke:0.25px #fff">东油库流量上升了</span><span style="display:inline-block;font-family:'Liberation Mono',monospace;font-size:14px;transform:scaleX(0.85);transform-origin:0 50%;-webkit-text-stroke:0.2px #fff">31m³/h</span></div><div class="a" style="left:434px;top:251px;color:#fff;white-space:nowrap;line-height:16px"><span style="font-size:14.2px;letter-spacing:0.4px;-webkit-text-stroke:0.25px #fff">南一油库流量下降了</span><span style="display:inline-block;font-family:'Liberation Mono',monospace;font-size:14px;transform:scaleX(0.85);transform-origin:0 50%;-webkit-text-stroke:0.2px #fff">242m³/h</span></div><div class="a" style="left:434px;top:300px;color:#fff;white-space:nowrap;line-height:16px"><span style="font-size:14.2px;letter-spacing:0.4px;-webkit-text-stroke:0.25px #fff">瞬时输差下降至</span><span style="display:inline-block;font-family:'Liberation Mono',monospace;font-size:14px;transform:scaleX(0.85);transform-origin:0 50%;-webkit-text-stroke:0.2px #fff">273m³/h</span></div><svg class="a" style="left:0;top:0" width="800" height="400"><line x1="348.4" y1="89.7" x2="379.3" y2="100.7" stroke="#F4F4F4" stroke-width="1.7" stroke-linecap="round"/><path d="M388.75,104 L374.3,103.0 L379.3,100.7 L376.9,95.6 Z" fill="#F4F4F4"/><line x1="449.5" y1="122.9" x2="414.6" y2="132.0" stroke="#F4F4F4" stroke-width="1.7" stroke-linecap="round"/><path d="M404.9,134.5 L417.5,127.2 L414.6,132.0 L419.4,134.8 Z" fill="#F4F4F4"/><line x1="448" y1="186" x2="420.3" y2="204.5" stroke="#F4F4F4" stroke-width="1.7" stroke-linecap="round"/><path d="M412,210 L421.5,199.0 L420.3,204.5 L425.8,205.5 Z" fill="#F4F4F4"/><line x1="431.5" y1="258.7" x2="415.7" y2="227.1" stroke="#F4F4F4" stroke-width="1.7" stroke-linecap="round"/><path d="M411.2,218.2 L421.0,229.0 L415.7,227.1 L414.0,232.5 Z" fill="#F4F4F4"/><line x1="433.75" y1="307.5" x2="422.2" y2="323.2" stroke="#F4F4F4" stroke-width="1.7" stroke-linecap="round"/><path d="M416.25,331.25 L421.4,317.7 L422.2,323.2 L427.7,322.3 Z" fill="#F4F4F4"/></svg></body></html>
